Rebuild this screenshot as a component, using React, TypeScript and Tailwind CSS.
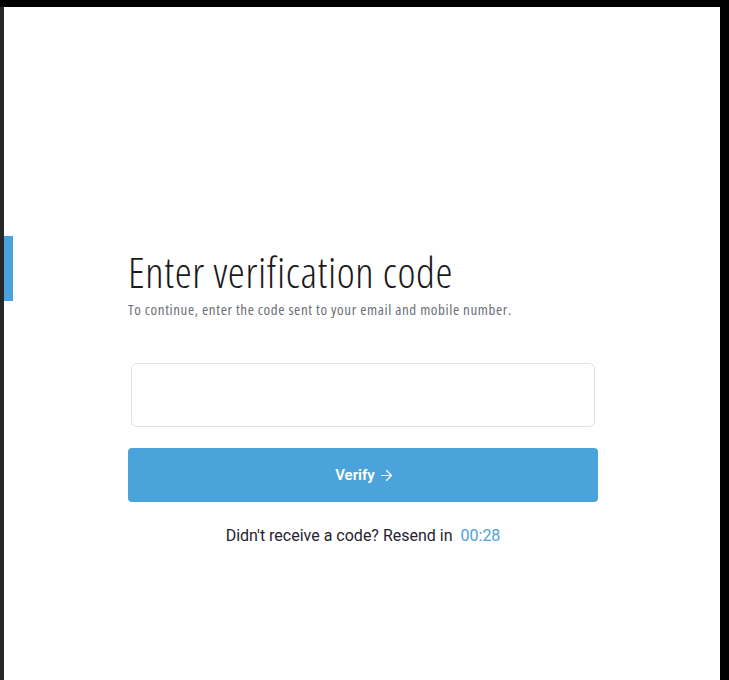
import React from "react";
import { ArrowRight } from "lucide-react";

export default function App() {
  return (
    <div className="w-[729px] h-[680px] bg-black flex flex-col font-['Open_Sans',sans-serif]">
      <div className="h-[7px] shrink-0" />
      <div className="flex flex-1 min-h-0">
        <div className="w-[4px] bg-[#26272b] shrink-0" />
        <div className="w-[716px] bg-white flex relative">
          <div className="absolute left-0 top-[229px] w-[9px] h-[65px] bg-[#4ba3db]" />
          <div className="flex flex-col pl-[124px] pt-[241px] w-full">
            <h1 className="text-[43px] leading-[48px] font-light font-stretch-condensed tracking-[0.6px] text-[#1a1a1a]">Enter verification code</h1>
            <p className="text-[15px] leading-[18px] font-stretch-condensed tracking-[0.6px] text-[#6b6f78] mt-[4px]">To continue, enter the code sent to your email and mobile number.</p>
            <div className="mt-[45px] ml-[3px] w-[464px] h-[64px] border border-[#e2e2e2] rounded-[6px]" />
            <button className="mt-[21px] w-[470px] h-[54px] bg-[#4ba3db] rounded-[4px] text-white text-[15px] font-semibold font-['Roboto',sans-serif] flex items-center justify-center gap-[3px] pl-[4px]">
              Verify <ArrowRight size={17} strokeWidth={1.75} />
            </button>
            <div className="w-[470px] mt-[22px] text-center text-[16px] font-normal font-['Roboto',sans-serif] text-[#1f2430]">
              Didn't receive a code? Resend in <span className="text-[#4ba3db] ml-1">00:28</span>
            </div>
          </div>
        </div>
        <div className="flex-1 bg-black" />
      </div>
    </div>
  );
}
